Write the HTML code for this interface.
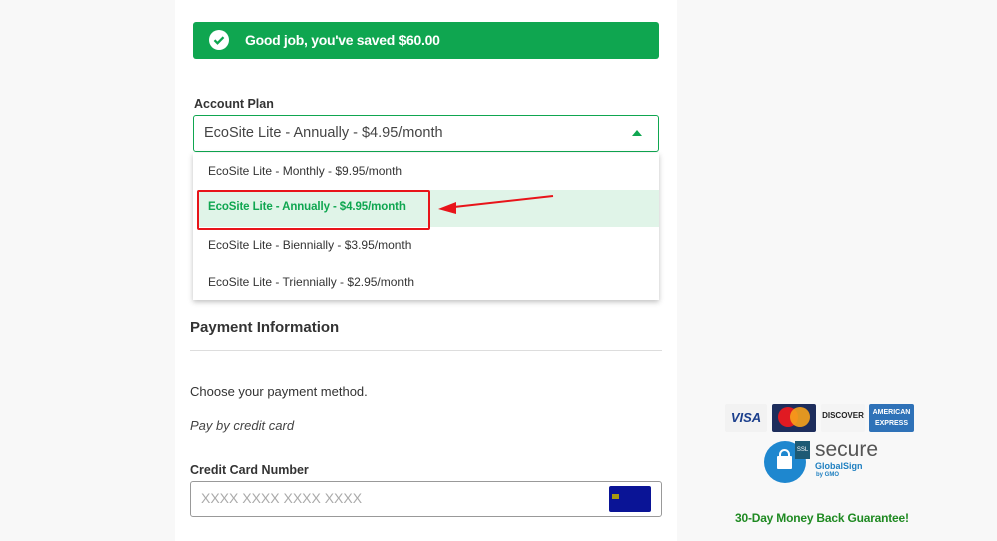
<!DOCTYPE html>
<html><head><style>
*{box-sizing:border-box;margin:0;padding:0}
body{width:997px;height:541px;background:#f8f8f8;font-family:"Liberation Sans",sans-serif;position:relative;overflow:hidden;color:#222}
.col{position:absolute;left:175px;top:0;width:502px;height:541px;background:#fff}
.a{position:absolute}
</style></head><body>
<div class="col"></div>
<div class="a" style="left:193px;top:22px;width:466px;height:37px;background:#0fa650;border-radius:3px"></div>
<svg class="a" style="left:208px;top:29px" width="22" height="22" viewBox="0 0 22 22"><circle cx="11" cy="11" r="10" fill="#fff"/><path d="M6.5 11.2l3 3 6-6" stroke="#0fa650" stroke-width="2.3" fill="none"/></svg>
<div class="a" style="left:245px;top:32px;color:#fff;font-size:14px;font-weight:bold;letter-spacing:-0.3px">Good job, you've saved $60.00</div>
<div class="a" style="left:194px;top:97px;font-size:12.5px;font-weight:bold;color:#333">Account Plan</div>
<div class="a" style="left:193px;top:115px;width:466px;height:37px;border:1px solid #0fa650;border-radius:3px"></div>
<div class="a" style="left:204px;top:125px;font-size:14.5px;color:#444">EcoSite Lite - Annually - $4.95/month</div>
<svg class="a" style="left:632px;top:130px" width="10" height="6"><path d="M0 6L5 0L10 6Z" fill="#0fa650"/></svg>
<div class="a" style="left:193px;top:153px;width:466px;height:147px;background:#fff;box-shadow:0 2px 5px rgba(0,0,0,.25)"></div>
<div class="a" style="left:197px;top:190px;width:462px;height:37px;background:#e0f4e8"></div>
<div class="a" style="left:208px;top:164px;font-size:12px;color:#333">EcoSite Lite - Monthly - $9.95/month</div>
<div class="a" style="left:208px;top:201px;font-size:11.5px;color:#0fa650;font-weight:bold;letter-spacing:-0.1px">EcoSite Lite - Annually - $4.95/month</div>
<div class="a" style="left:208px;top:238px;font-size:12px;color:#333">EcoSite Lite - Biennially - $3.95/month</div>
<div class="a" style="left:208px;top:275px;font-size:12px;color:#333">EcoSite Lite - Triennially - $2.95/month</div>
<div class="a" style="left:197px;top:190px;width:233px;height:40px;border:2px solid #e8141a;border-radius:2px"></div>
<svg class="a" style="left:436px;top:193px" width="120" height="22"><path d="M117 3L18 14" stroke="#e8141a" stroke-width="2"/><path d="M2 16L20 9L20 21Z" fill="#e8141a"/></svg>
<div class="a" style="left:190px;top:319px;font-size:15px;font-weight:bold;color:#333">Payment Information</div>
<div class="a" style="left:190px;top:350px;width:472px;height:1px;background:#ddd"></div>
<div class="a" style="left:190px;top:384px;font-size:13px;color:#333">Choose your payment method.</div>
<div class="a" style="left:190px;top:418px;font-size:13px;font-style:italic;color:#444">Pay by credit card</div>
<div class="a" style="left:190px;top:463px;font-size:12.5px;font-weight:bold;color:#333">Credit Card Number</div>
<div class="a" style="left:190px;top:481px;width:472px;height:36px;border:1px solid #999;border-radius:3px"></div>
<div class="a" style="left:201px;top:490px;font-size:14px;color:#aaa">XXXX XXXX XXXX XXXX</div>
<div class="a" style="left:609px;top:486px;width:42px;height:26px;background:#0a1496;border-radius:2px"><div style="position:absolute;left:3px;top:8px;width:7px;height:5px;background:#a89a10"></div></div>
<div class="a" style="left:725px;top:404px;width:42px;height:28px;background:#f2f2f2;border-radius:2px;color:#1a3e8c;font-weight:bold;font-style:italic;font-size:13px;text-align:center;line-height:28px">VISA</div>
<div class="a" style="left:772px;top:404px;width:44px;height:28px;background:#1d2d5c;border-radius:2px"><div style="position:absolute;left:6px;top:3px;width:20px;height:20px;border-radius:50%;background:#e01a22"></div><div style="position:absolute;left:18px;top:3px;width:20px;height:20px;border-radius:50%;background:#f7a21b;opacity:.9"></div></div>
<div class="a" style="left:821px;top:404px;width:44px;height:28px;background:#f4f4f4;border-radius:2px;font-size:8px;font-weight:bold;text-align:center;line-height:24px;color:#222">DISCOVER</div>
<div class="a" style="left:869px;top:404px;width:45px;height:28px;background:#2f72b8;border-radius:2px;color:#fff;font-size:7px;font-weight:bold;text-align:center;line-height:11px;padding-top:3px">AMERICAN<br>EXPRESS</div>
<div class="a" style="left:764px;top:441px;width:42px;height:42px;border-radius:50%;background:#1e87cf"></div>
<div class="a" style="left:777px;top:456px;width:15px;height:13px;background:#fff;border-radius:1px"></div>
<div class="a" style="left:779px;top:449px;width:11px;height:12px;border:2px solid #fff;border-radius:6px 6px 0 0"></div>
<div class="a" style="left:795px;top:441px;width:15px;height:18px;background:#1d5a74;color:#fff;font-size:6px;text-align:center;line-height:18px">SSL</div>
<div class="a" style="left:815px;top:438px;font-size:21px;color:#555">secure</div>
<div class="a" style="left:815px;top:461px;font-size:9px;font-weight:bold;color:#1e7fc0">GlobalSign</div>
<div class="a" style="left:816px;top:472px;font-size:6px;font-weight:bold;color:#1e7fc0">by GMO</div>
<div class="a" style="left:735px;top:511px;font-size:12px;font-weight:bold;color:#1f8a22;letter-spacing:-0.2px">30-Day Money Back Guarantee!</div>
</body></html>
